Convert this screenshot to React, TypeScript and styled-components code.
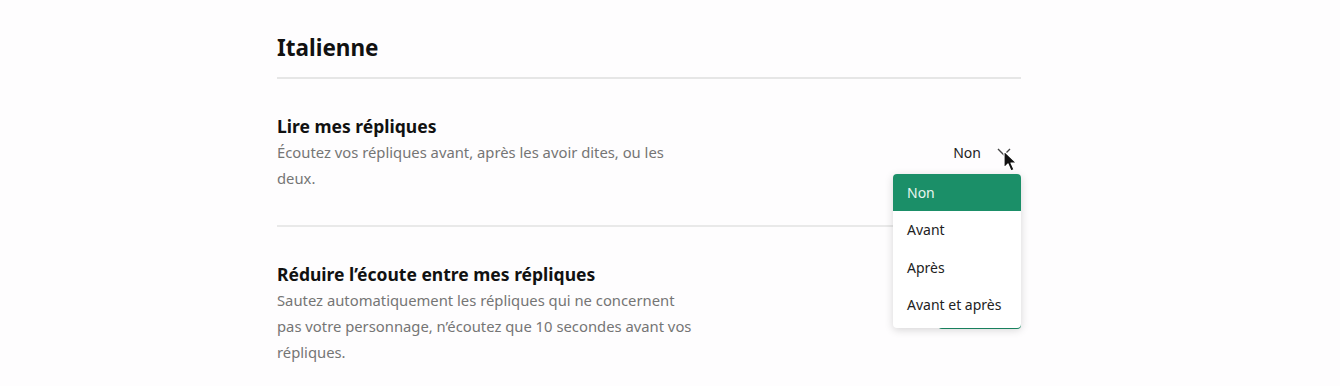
import React from "react";
import styled, { createGlobalStyle } from "styled-components";

const GlobalStyle = createGlobalStyle`
  html, body {
    margin: 0;
    padding: 0;
    background: #fefdfe;
    font-family: "Noto Sans", "Open Sans", sans-serif;
    color: #111;
  }
`;

const Page = styled.div`
  width: 744px;
  margin-left: 277px;
  padding-top: 34px;
`;

const Heading = styled.h2`
  margin: 0;
  font-size: 22.5px;
  line-height: 28px;
  font-weight: 700;
  padding-bottom: 15px;
  border-bottom: 2px solid #e6e6e6;
`;

const Row = styled.div<{ $last?: boolean }>`
  display: flex;
  align-items: center;
  justify-content: space-between;
  padding: 35px 0 34px;
  border-bottom: ${(p) => (p.$last ? "none" : "2px solid #e9e9e9")};
`;

const Texts = styled.div`
  width: 425px;
`;

const Title = styled.div`
  font-size: 17.5px;
  line-height: 24px;
  font-weight: 700;
  margin-bottom: 1px;
`;

const Desc = styled.div`
  font-size: 14.8px;
  line-height: 26px;
  color: #757575;
`;

const Select = styled.div`
  position: relative;
  display: flex;
  align-items: center;
  gap: 16px;
  height: 24px;
  padding-right: 10px;
  font-size: 14px;
  color: #222;
`;

const Menu = styled.ul`
  position: absolute;
  top: calc(100% + 9px);
  right: 0;
  width: 128px;
  margin: 0;
  padding: 0 0 4px;
  list-style: none;
  background: #fff;
  border-radius: 4px;
  box-shadow: 0 2px 8px rgba(0, 0, 0, 0.16);
  overflow: hidden;
  z-index: 2;
`;

const Option = styled.li<{ $active?: boolean }>`
  height: 37.5px;
  display: flex;
  align-items: center;
  padding-left: 14px;
  font-size: 14px;
  white-space: nowrap;
  background: ${(p) => (p.$active ? "#1b8f68" : "transparent")};
  color: ${(p) => (p.$active ? "#e8f5ef" : "#222")};
`;

const Cursor = styled.svg`
  position: absolute;
  left: 50px;
  top: 9px;
  z-index: 3;
`;

const GreenButton = styled.div`
  width: 83px;
  height: 38px;
  border-radius: 4px;
  background: #1b8f68;
  margin-top: -8px;
`;

const options = ["Non", "Avant", "Après", "Avant et après"];

export default function App() {
  return (
    <>
      <GlobalStyle />
      <Page>
        <Heading>Italienne</Heading>
        <Row>
          <Texts>
            <Title>Lire mes répliques</Title>
            <Desc>Écoutez vos répliques avant, après les avoir dites, ou les deux.</Desc>
          </Texts>
          <Select>
            <span>Non</span>
            <svg width="14" height="9" viewBox="0 0 14 9">
              <polyline points="1,1 7,7 13,1" fill="none" stroke="#444" strokeWidth="1.4" />
            </svg>
            <Cursor width="15" height="23" viewBox="0 0 15 23">
              <path d="M1 1 L1 18 L5 14 L8 21 L11 19.6 L8 13 L13.5 13 Z" fill="#111" stroke="#fff" strokeWidth="1.2" strokeLinejoin="round" />
            </Cursor>
            <Menu>
              {options.map((o, i) => (
                <Option key={o} $active={i === 0}>
                  {o}
                </Option>
              ))}
            </Menu>
          </Select>
        </Row>
        <Row $last>
          <Texts>
            <Title>Réduire l’écoute entre mes répliques</Title>
            <Desc>
              Sautez automatiquement les répliques qui ne concernent pas votre personnage,
              n’écoutez que 10 secondes avant vos répliques.
            </Desc>
          </Texts>
          <GreenButton />
        </Row>
      </Page>
    </>
  );
}
